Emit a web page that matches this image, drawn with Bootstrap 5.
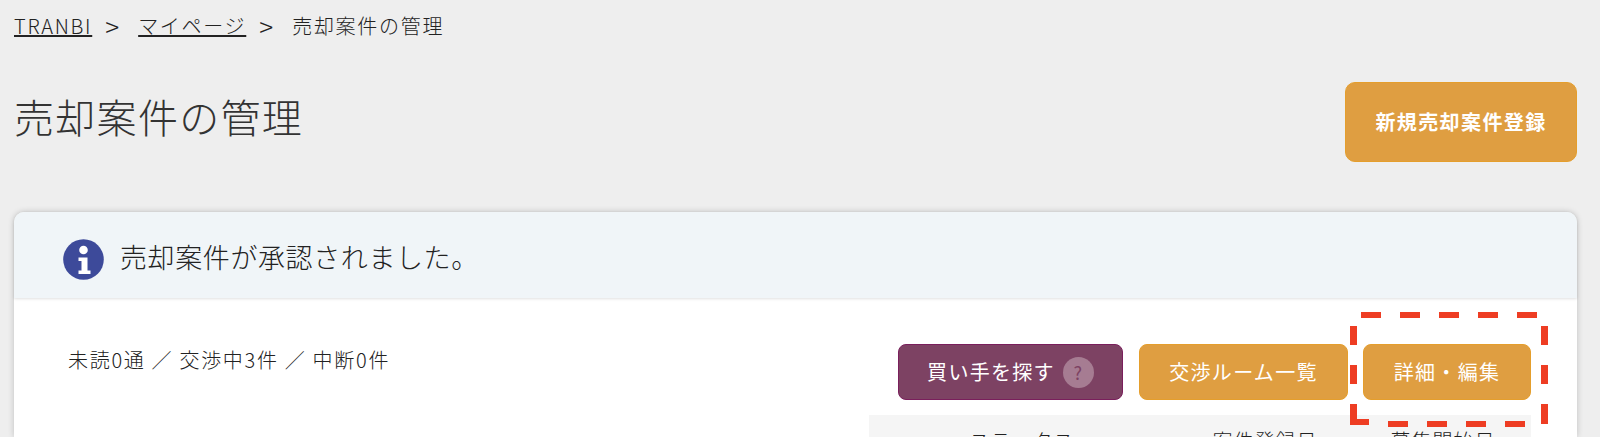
<!DOCTYPE html>
<html lang="ja">
  <head>
    <meta charset="UTF-8" />
    <meta name="viewport" content="width=device-width, initial-scale=1.0" />
    <title>売却案件の管理</title>
    <link href="https://cdn.jsdelivr.net/npm/bootstrap@5.3.0/dist/css/bootstrap.min.css" rel="stylesheet" />
    <style>
      html, body {
        height: 437px;
        overflow: hidden;
      }
      body {
        background-color: #eee;
        color: #333;
        font-family: "Noto Sans CJK JP", "Liberation Sans", sans-serif;
      }
      .page-wrap {
        padding: 14px 23px 0 14px;
      }
      .crumbs {
        margin: 0;
        font-size: 20px;
        line-height: 24px;
        letter-spacing: 1.7px;
        font-weight: 300;
        color: #222;
      }
      .crumbs a {
        color: #222;
      }
      .crumb-sep {
        margin: 0 19px 0 13px;
        font-size: 26px;
        letter-spacing: 0;
      }
      .page-title {
        margin: 9px 0 0;
        font-size: 40px;
        font-weight: 300;
        letter-spacing: 1.3px;
        line-height: 50px;
      }
      .title-row {
        height: 174px;
        padding-top: 44px;
      }
      .btn-orange {
        background-color: #df9e41;
        border: 1px solid #e59e2c;
        color: #fff;
      }
      .btn-new {
        width: 232px;
        height: 80px;
        border-radius: 10px;
        font-size: 20px;
        font-weight: 700;
        letter-spacing: 1.4px;
        padding: 0;
      }
      .panel {
        background: #fff;
        border-radius: 10px 10px 0 0;
        box-shadow: 0 0 6px rgba(0, 0, 0, .2);
        height: 225px;
      }
      .panel-head {
        background: #f0f5f8;
        height: 86px;
        padding-left: 49px;
        border-radius: 10px 10px 0 0;
        box-shadow: 0 1px 3px rgba(0, 0, 0, .12);
        font-size: 27px;
        font-weight: 300;
        letter-spacing: .6px;
        color: #222;
      }
      .panel-head svg {
        margin-top: 8px;
      }
      .panel-head span {
        margin-top: 4px;
      }
      .panel-body {
        padding: 46px 46px 0 54px;
        height: 139px;
        overflow: hidden;
      }
      .counts {
        font-size: 20px;
        font-weight: 300;
        letter-spacing: 1.7px;
        margin-top: 1px;
        color: #222;
      }
      .act-btn {
        height: 56px;
        border-radius: 8px;
        font-size: 20px;
        letter-spacing: 1.3px;
        padding: 0;
      }
      .btn-plum {
        background-color: #7d4263;
        border: 1px solid #7a1f5c;
        color: #fff;
        width: 225px;
      }
      .help-dot {
        width: 31px;
        height: 31px;
        border-radius: 50%;
        background: #a67c92;
        color: #7d4263;
        font-size: 18px;
      }
      .btn-rooms {
        width: 209px;
        margin-right: -1px;
      }
      .btn-detail {
        width: 168px;
      }
      .dash-mark {
        left: -13px;
        top: -32px;
        pointer-events: none;
      }
      .head-table {
        width: 662px;
        margin: 15px 0 0 auto;
        background: #f5f5f5;
        font-size: 20px;
      }
      .head-table th {
        font-weight: 300;
        padding: 11px 0;
        border: 0;
        background: transparent;
        color: #222;
        letter-spacing: 1px;
      }
    </style>
  </head>
  <body>
    <div class="page-wrap">
      <nav class="crumbs d-flex">
        <a href="#">TRANBI</a><span class="crumb-sep">&gt;</span>
        <a href="#">マイページ</a><span class="crumb-sep">&gt;</span>
        <span>売却案件の管理</span>
      </nav>
      <div class="title-row d-flex justify-content-between align-items-start">
        <h1 class="page-title">売却案件の管理</h1>
        <button type="button" class="btn btn-orange btn-new">新規売却案件登録</button>
      </div>
      <div class="panel">
        <div class="panel-head d-flex align-items-center gap-3">
          <svg width="41" height="43" viewBox="0 0 41 43">
            <circle cx="20.5" cy="21.5" r="20.3" fill="#3d4a9a" />
            <circle cx="20.5" cy="12" r="4.3" fill="#fff" />
            <path d="M15.500 19.500h9v13h3v3.500h-12v-3.500h3v-9.500h-3z" fill="#fff" />
          </svg>
          <span>売却案件が承認されました。</span>
        </div>
        <div class="panel-body">
          <div class="d-flex justify-content-between align-items-start">
            <div class="counts">未読0通 ／ 交渉中3件 ／ 中断0件</div>
            <div>
              <div class="d-flex justify-content-end gap-3">
                <button type="button" class="btn act-btn btn-plum d-flex align-items-center justify-content-center gap-2">
                  買い手を探す <span class="help-dot d-flex align-items-center justify-content-center">?</span>
                </button>
                <button type="button" class="btn act-btn btn-orange btn-rooms">交渉ルーム一覧</button>
                <div class="position-relative">
                  <button type="button" class="btn act-btn btn-orange btn-detail">詳細・編集</button>
                  <svg class="dash-mark position-absolute" width="198" height="115" viewBox="0 0 198 115" fill="#ee3d23">
                    <path d="M11 0h20v6H11zM50 0h20v6H50zM89 0h20v6H89zM128 0h20v6h-20zM167 0h20v6h-20z" />
                    <path d="M0 14h7v19H0zM0 53h7v19H0zM0 92h7v15h12v6H0z" />
                    <path d="M191 14h7v19h-7zM191 53h7v19h-7zM191 92h7v20h-7z" />
                    <path d="M38 109h20v6H38zM77 109h20v6H77zM116 109h20v6h-20zM155 109h20v6h-20z" />
                  </svg>
                </div>
              </div>
              <table class="table head-table text-center">
                <thead>
                  <tr>
                    <th style="width: 306px">ステータス</th>
                    <th style="width: 180px">案件登録日</th>
                    <th style="width: 176px">募集開始日</th>
                  </tr>
                </thead>
              </table>
            </div>
          </div>
        </div>
      </div>
    </div>
    <script src="https://cdn.jsdelivr.net/npm/bootstrap@5.3.0/dist/js/bootstrap.bundle.min.js"></script>
  </body>
</html>
